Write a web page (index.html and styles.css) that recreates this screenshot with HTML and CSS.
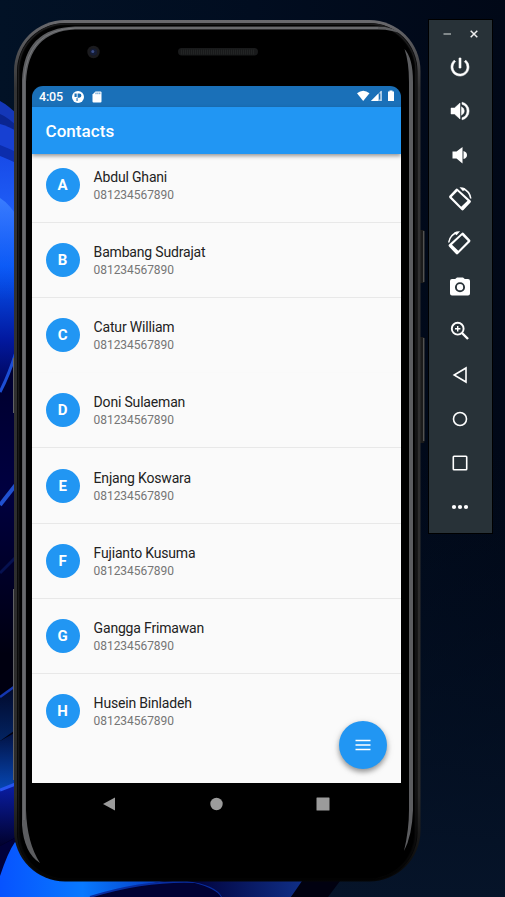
FILE: index.html
```html
<!DOCTYPE html>
<html lang="en">
<head>
<meta charset="utf-8">
<title>Contacts</title>
<link rel="stylesheet" href="styles.css">
</head>
<body>
<svg class="wallpaper" viewBox="0 0 505 897" aria-hidden="true">
  <defs>
    <linearGradient id="sky" x1="0" y1="0" x2="1" y2="0"><stop offset="0" stop-color="#021226"/><stop offset=".5" stop-color="#010d20"/><stop offset="1" stop-color="#010817"/></linearGradient>
    <linearGradient id="low" x1="0" y1="0" x2="0" y2="1"><stop offset="0" stop-color="#020f22" stop-opacity="0"/><stop offset="1" stop-color="#061429"/></linearGradient>
    <linearGradient id="petal" x1="0" y1="0" x2="0" y2="1"><stop offset="0" stop-color="#184be8"/><stop offset=".25" stop-color="#1f5ff8"/><stop offset=".45" stop-color="#0757f5"/><stop offset=".75" stop-color="#0219a0"/><stop offset="1" stop-color="#000044"/></linearGradient>
    <linearGradient id="sheen" x1="0" y1="0" x2="0" y2="1"><stop offset="0" stop-color="#3a7dff"/><stop offset="1" stop-color="#0757f5" stop-opacity="0"/></linearGradient>
    <linearGradient id="deep" x1="0" y1="0" x2="0" y2="1"><stop offset="0" stop-color="#00002c"/><stop offset=".25" stop-color="#000040"/><stop offset=".55" stop-color="#000010"/><stop offset="1" stop-color="#000010"/></linearGradient>
    <linearGradient id="fold" x1="0" y1="0" x2="0" y2="1"><stop offset="0" stop-color="#021040"/><stop offset="1" stop-color="#0647b4"/></linearGradient>
    <linearGradient id="under" x1="0" y1="0" x2="0" y2="1"><stop offset="0" stop-color="#0a1ea8"/><stop offset="1" stop-color="#01012c"/></linearGradient>
    <linearGradient id="glow" x1="0" y1="0" x2="1" y2="0"><stop offset="0" stop-color="#0753ff"/><stop offset=".5" stop-color="#0879ff"/><stop offset="1" stop-color="#0639c0"/></linearGradient>
    <linearGradient id="tail" x1="0" y1="0" x2="1" y2="0"><stop offset="0" stop-color="#01013a"/><stop offset="1" stop-color="#103088"/></linearGradient>
  </defs>
  <rect width="505" height="897" fill="url(#sky)"/>
  <rect y="450" width="505" height="447" fill="url(#low)"/>
  <path d="M0 101Q8 105 20 117V420H0Z" fill="#1437b8"/>
  <path d="M0 114Q8 117 20 129V420H0Z" fill="#0a2590"/>
  <path d="M0 124Q8 126 20 133V420H0Z" fill="#1740d2"/>
  <path d="M0 145Q8 148 20 154V420H0Z" fill="#0c2dac"/>
  <path d="M0 156Q8 159 20 165V370Q9 382 0 400Z" fill="url(#petal)"/>
  <path d="M0 198Q10 204 20 221V300H0Z" fill="url(#sheen)"/>
  <path d="M0 392Q10 370 20 354V900H0Z" fill="url(#deep)"/>
  <path d="M0 392Q9 375 16 352" fill="none" stroke="#1c4ed5" stroke-width="3"/>
  <path d="M0 505L18 482" fill="none" stroke="#2050cf" stroke-width="4"/>
  <path d="M0 573L18 555" fill="none" stroke="#061150" stroke-width="3"/>
  <path d="M0 697L18 684V728L0 741Z" fill="url(#fold)" opacity=".5"/>
  <path d="M0 697L18 684" stroke="#1437b0" stroke-width="2.5"/>
  <path d="M0 741L18 731V784L0 790Z" fill="url(#fold)"/>
  <path d="M0 790L18 783V836L0 846Z" fill="url(#under)"/>
  <path d="M0 790L18 783" stroke="#2755ef" stroke-width="3"/>
  <path d="M0 846L15 838Q30 882 60 881L220 881V897H0Z" fill="#01013a"/>
  <path d="M0 876Q8 852 15 842L60 881H165Q118 889 90 897H0Z" fill="url(#glow)"/>
  <path d="M90 897Q145 880 195 882Q218 888 222 897Z" fill="#010234"/>
  <path d="M90 897Q145 880 195 882Q218 888 222 897" fill="none" stroke="#082da0" stroke-width="2"/>
  <path d="M187 881H305L291 897H222Q216 885 187 881Z" fill="url(#tail)"/>
  <path d="M302 881H340L328 897H291Z" fill="#010110"/>
</svg>

<main class="desktop">
  <section class="phone">
    <svg class="frame" viewBox="0 0 413 867" aria-hidden="true">
      <defs>
        <linearGradient id="shell" x1="0" y1="0" x2="0" y2="1"><stop offset="0" stop-color="#6a6a6e"/><stop offset=".08" stop-color="#333334"/><stop offset=".9" stop-color="#2b2b2b"/><stop offset="1" stop-color="#050505"/></linearGradient>
        <linearGradient id="groove" x1="0" y1="0" x2="0" y2="1"><stop offset="0" stop-color="#1c1c1d"/><stop offset=".9" stop-color="#171718"/><stop offset="1" stop-color="#020202"/></linearGradient>
      </defs>
      <path d="M.7 338V393M.7 569V760" stroke="#606164" stroke-width="1.4"/>
      <path d="M407 210h3q1.500 0 1.500 1.500v50q0 1.500-1.500 1.500h-3zM407 317h3q1.500 0 1.500 1.500v103q0 1.500-1.500 1.500h-3z" fill="#1b1b1b"/>
      <path d="M410.700 211V262M410.700 318V421" stroke="#555554" stroke-width="1.3"/>
      <rect x="1" y="0" width="406.500" height="861.500" rx="51" fill="url(#shell)"/>
      <rect x="4" y="3" width="400.500" height="857.500" rx="48" fill="#050505"/>
      <rect x="5.500" y="4" width="397.500" height="855.500" rx="47" fill="none" stroke="url(#groove)" stroke-width="1.500"/>
      <rect x="7.500" y="5.500" width="393.500" height="853" rx="45" fill="#000"/>
      <path d="M9 805V60Q11 8 62 6.500H365Q380 6.500 391 15Q380 9.500 365 9.500H62Q15 12 13 62V790Q14 823 27 843Q11 833 9 805Z" fill="#5c5d60"/>
      <path d="M11 800V60Q14 10 62 8H365" fill="none" stroke="#77787b" stroke-width="1"/>
      <path d="M391.500 29Q400 38 400 62V790Q399 816 391 831Q396 810 396 790V62Q396 42 391.500 29Z" fill="#5c5d60"/>
      <rect x="165" y="28" width="80" height="7.500" rx="3.700" fill="#191a1b"/>
      <path d="M168 32H242" stroke="#222424" stroke-width="5" stroke-dasharray="1 1"/>
      <circle cx="80.500" cy="32" r="6.200" fill="#1b1b1e"/><circle cx="80.500" cy="32" r="3.600" fill="#151c34"/><circle cx="79.800" cy="31.500" r="1.500" fill="#3a4c86"/>
    </svg>
    <div class="screen">
      <header class="status">
        <span class="time">4:05</span>
        <svg class="app-icon" viewBox="0 0 12 12"><circle cx="6" cy="6" r="6" fill="#fff"/><path d="M2.500 2.500H4.700V6H2.500ZM5.600 2.500H7.300A2.100 2.100 0 0 1 7.300 6.700H5.600V10H4.500V7H5.600Z" fill="#1a70b8"/></svg>
        <svg class="card-icon" viewBox="0 0 10 12"><path d="M3.500.5H8.500Q9.500.5 9.500 1.500V10.500Q9.500 11.500 8.500 11.500H1.500Q.5 11.500.5 10.500V3.500Z" fill="#fff"/><path d="M4 1.500V3.200M5.900 1.500V3.200M7.800 1.500V3.200" stroke="#1a70b8" stroke-width=".8"/></svg>
        <svg class="signals" viewBox="0 0 38 12"><path d="M0 3.200Q6.200-1.900 12.500 3.200L6.200 11Z" fill="#fff"/><path d="M24.500.5V11H14Z" fill="#fff" opacity=".6"/><path d="M21.200 3.700V11H14Z" fill="#fff"/><path d="M22 3.500H23.500V9.500H22Z" fill="#1a70b8"/><path d="M24.100 1V11" stroke="#fff" opacity=".8"/><path d="M31 1.600H32.500V.5H35.500V1.600H37V11H31Z" fill="#fff"/></svg>
      </header>
      <div class="appbar"><h1>Contacts</h1></div>
      <div class="list">
        <article><b class="avatar">A</b><div><h2>Abdul Ghani</h2><p>081234567890</p></div></article>
        <article><b class="avatar">B</b><div><h2>Bambang Sudrajat</h2><p>081234567890</p></div></article>
        <article class="faint"><b class="avatar">C</b><div><h2>Catur William</h2><p>081234567890</p></div></article>
        <article><b class="avatar">D</b><div><h2>Doni Sulaeman</h2><p>081234567890</p></div></article>
        <article><b class="avatar">E</b><div><h2>Enjang Koswara</h2><p>081234567890</p></div></article>
        <article><b class="avatar">F</b><div><h2>Fujianto Kusuma</h2><p>081234567890</p></div></article>
        <article><b class="avatar">G</b><div><h2>Gangga Frimawan</h2><p>081234567890</p></div></article>
        <article class="last"><b class="avatar">H</b><div><h2>Husein Binladeh</h2><p>081234567890</p></div></article>
        <button class="fab" aria-label="Menu"><svg viewBox="0 0 16 12"><path d="M.5 1.500H15.500M.5 6H15.500M.5 10.500H15.500" stroke="#fff" stroke-width="1.700"/></svg></button>
      </div>
      <nav class="navigation">
        <svg viewBox="0 0 14 14"><path d="M1 7L13 .5V13.500Z"/></svg>
        <svg viewBox="0 0 14 14"><circle cx="7.500" cy="7" r="6.200"/></svg>
        <svg viewBox="0 0 14 14"><rect x=".5" y=".5" width="13" height="13" rx=".5"/></svg>
      </nav>
    </div>
  </section>

  <aside class="toolbar">
    <div class="window-controls">
      <svg viewBox="0 0 8 8"><path d="M.5 4H8" stroke="#8c9396" stroke-width="1.800"/></svg>
      <svg viewBox="0 0 8 8"><path d="M.7.7L7.300 7.300M7.300.7L.7 7.300" stroke="#eee" stroke-width="1.500"/></svg>
    </div>
    <svg viewBox="0 0 24 24"><path d="M13 3h-2v10h2V3zm4.830 2.170l-1.420 1.420A6.920 6.920 0 0 1 19 12a7 7 0 1 1-11.420-5.420L6.170 5.170A9 9 0 1 0 21 12a8.930 8.930 0 0 0-3.170-6.830z" stroke="#fff" stroke-width=".6"/></svg>
    <svg viewBox="0 0 24 24"><path d="M3 9v6h3.500l5.500 5V4L6.500 9zM13.500 7.800v8.400Q16.300 14.800 16.300 12T13.500 7.800zM14 3.200v2.100a7 7 0 0 1 0 13.400v2.100a9 9 0 0 0 0-17.600z" stroke="#fff" stroke-width=".5"/></svg>
    <svg viewBox="0 0 24 24"><path d="M4.500 8.500v7h4l6 5V4l-6 4.500zM15.500 8v8Q19 15 19 12T15.500 8z"/></svg>
    <svg viewBox="0 0 24 24"><g id="rotate"><path fill-rule="evenodd" d="M7.600 2.200Q8.800 1 10 2.200L22.500 13.500Q23.500 14.500 22.500 15.500L15.700 22.800Q14.500 24 13.300 22.800L1.500 11Q.5 9.800 1.500 8.700ZM9.400 4.300L3.700 9.900L13.200 19.700L19.500 13.700Z"/><path fill="none" stroke="#fff" stroke-width="1.500" d="M14.500 1.700Q21.500 3.500 22.800 11.500"/><path d="M11.500.3Q15 .2 17.500 1.500L15 4.200Z"/></g></svg>
    <svg viewBox="0 0 24 24"><use href="#rotate" transform="matrix(-1 0 0 1 23.500 0)"/></svg>
    <svg viewBox="0 0 24 24"><path d="M9 2.500L7.200 4H4Q2 4 2 6V18.500Q2 20.500 4 20.500H20Q22 20.500 22 18.500V6Q22 4 20 4H16.800L15 2.500Z"/><circle cx="12" cy="12.200" r="4.100" fill="none" stroke="#283238" stroke-width="1.900"/></svg>
    <svg viewBox="0 0 24 24"><g fill="none" stroke="#fff"><circle cx="9.700" cy="9.700" r="5.900" stroke-width="1.900"/><path d="M14 14L20 20" stroke-width="2.400"/><path d="M7 9.700H12.400M9.700 7V12.400" stroke-width="1.400"/></g></svg>
    <svg viewBox="0 0 24 24"><path d="M6.200 12L18 5V19Z" fill="none" stroke="#fff" stroke-width="1.600"/></svg>
    <svg viewBox="0 0 24 24"><circle cx="12" cy="12" r="6.500" fill="none" stroke="#fff" stroke-width="1.600"/></svg>
    <svg viewBox="0 0 24 24"><rect x="5.300" y="5.300" width="13.400" height="13.400" rx=".7" fill="none" stroke="#fff" stroke-width="1.600"/></svg>
    <svg viewBox="0 0 24 24"><circle cx="6" cy="12" r="2.100"/><circle cx="12" cy="12" r="2.100"/><circle cx="18" cy="12" r="2.100"/></svg>
  </aside>
</main>
</body>
</html>
```
FILE: styles.css
```css
* { box-sizing: border-box; }
body { margin: 0; width: 505px; height: 897px; overflow: hidden; position: relative; background: #021020; font-family: Roboto, "Liberation Sans", sans-serif; }
h1, h2, p { margin: 0; }
svg { display: block; }
.wallpaper { position: absolute; inset: 0; width: 505px; height: 897px; }
.desktop { position: relative; display: flex; align-items: flex-start; padding: 19px 12px 0 13px; gap: 2px; }
.phone { position: relative; width: 413px; height: 867px; padding: 67px 0 0 19px; flex: none; }
.frame { position: absolute; top: 1px; left: 0; width: 413px; height: 867px; }
.screen { position: relative; width: 369px; height: 738px; border-radius: 11px; overflow: hidden; background: #000; }
.status { height: 21px; background: #1a70b8; color: #fff; display: flex; align-items: center; padding: 0 6px 0 7px; }
.time { width: 33px; font-size: 12.5px; font-weight: 500; line-height: 21px; letter-spacing: -.15px; }
.app-icon { width: 12px; height: 12px; }
.card-icon { width: 10px; height: 12px; margin-left: 8px; }
.signals { width: 38px; height: 12px; margin-left: auto; margin-top: -1px; }
.appbar { position: relative; z-index: 1; height: 47px; background: #2196f3; color: #fff; display: flex; align-items: center; padding-left: 13.5px; box-shadow: 0 2px 4px #0006; }
h1 { font-size: 17px; font-weight: 500; line-height: 24px; letter-spacing: .05px; }
.list { position: relative; height: 629px; background: #fafafa; }
article { height: 75.15px; display: flex; align-items: flex-start; padding: 20.1px 13.6px 0; gap: 14px; border-bottom: 1px solid #e8e8e8; }
article:first-child { height: 69px; padding-top: 14px; }
article.faint { border-color: #f9f9f9; }
article.last { border: 0; }
.avatar { width: 34px; height: 34px; border-radius: 50%; background: #2196f3; color: #fff; font-size: 15px; font-weight: 700; line-height: 35px; text-align: center; flex: none; }
h2 { font-size: 14px; font-weight: 400; line-height: 18px; color: #222; letter-spacing: -.18px; }
p { font-size: 12px; line-height: 19px; color: #757575; letter-spacing: -.05px; }
article div { height: 37px; }
.fab { position: absolute; right: 13.6px; bottom: 13.6px; width: 48px; height: 48px; border: 0; border-radius: 50%; background: #2196f3; display: flex; align-items: center; justify-content: center; padding: 0; box-shadow: 0 3px 5px #0005, 0 2px 8px #0002; }
.fab svg { width: 16px; height: 12px; }
.navigation { height: 41px; display: flex; justify-content: space-between; align-items: center; padding: 0 71px 0 70px; }
.navigation svg { width: 14px; height: 14px; fill: #9b9b9b; }
.toolbar { width: 65px; height: 515px; flex: none; border: 1px solid #000; background: #283238; display: flex; flex-direction: column; align-items: flex-start; }
.toolbar > svg { width: 24px; height: 24px; margin: 0 0 20px 19px; fill: #fff; flex: none; }
.window-controls { width: 100%; height: 35px; padding: 10px 14px; display: flex; justify-content: space-between; flex: none; }
.window-controls svg { width: 8px; height: 8px; }
```
